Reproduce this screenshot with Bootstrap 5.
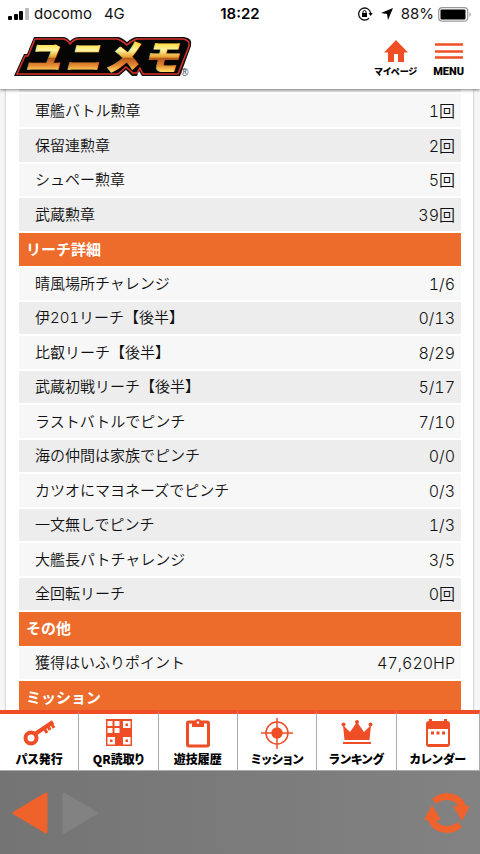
<!DOCTYPE html>
<html lang="ja">
<head>
<meta charset="utf-8">
<meta name="viewport" content="width=device-width, initial-scale=1">
<title>ユニメモ</title>
<link href="https://cdn.jsdelivr.net/npm/bootstrap@5.3.0/dist/css/bootstrap.min.css" rel="stylesheet">
<style>
body{font-family:Inter,"Noto Sans CJK JP",sans-serif;color:#222;background:#f6f6f6}
.status-bar{height:28px;font-size:15px;line-height:28px;color:#111;grid-template-columns:1fr auto 1fr;z-index:3}
.clock{font-weight:600;color:#000}
.site-head{height:61px;box-shadow:0 1px 3px rgba(0,0,0,.5);z-index:2}
.head-link{color:#000;font-weight:900;line-height:12px}
.head-link.jp{font-size:9px;font-family:"Noto Sans CJK JP",sans-serif;font-feature-settings:"palt"}
.head-link.en{font-size:11px;font-family:Roboto,sans-serif}
.brand-logo{overflow:visible}
.sheet{margin:0 7px 0 6px;padding:0 12px 0 13px;background:#fff;box-shadow:0 0 2px rgba(0,0,0,.35)}
.records{border-top:3px solid #ededed;font-size:15px;line-height:20px;border-collapse:separate;border-spacing:0;font-variant-numeric:tabular-nums}
.records tr{height:34px}
.records tr:nth-child(even){height:35px}
.records th,.records td{padding:0 6px 0 16px;border-bottom:2px solid #fff;background:#f7f7f7;color:#111;font-weight:350;vertical-align:middle}
.records tbody tr:first-child>*{border-top:2px solid #fff}
.records tr:first-child{height:37px}
.records tr.even>*{background:#ededed}
.records td{text-align:right;font-size:16px}
.records tr .group{background:#ee6c2b;color:#fff;font-weight:700;padding-left:7px;border-bottom-width:1px}
.tab-bar{height:61px;background:#fff;z-index:2}
.tab-link{border-top:4px solid #ee4d26;border-right:1px solid #aaa;border-bottom:1px solid #aaa;color:#000;font:900 12px/18px "Noto Sans CJK JP",sans-serif;font-feature-settings:"palt";flex:20 1 0}
.tab-link:last-child{flex-grow:21}
.tab-link svg{height:32px;width:36px}
.browser-bar{height:83px;background:linear-gradient(90deg,#747474,#828282);padding:0 10px 0 12px;gap:14px}
</style>
<script src="https://cdn.jsdelivr.net/npm/bootstrap@5.3.0/dist/js/bootstrap.bundle.min.js"></script>
</head>
<body class="vh-100 d-flex flex-column overflow-hidden">
<div class="status-bar position-relative d-grid bg-white px-2 flex-shrink-0">
  <div class="d-flex align-items-center">
    <svg class="me-1" width="22" height="12"><rect y="8" width="4" height="4" rx="1"/><rect x="6" y="6" width="4" height="6" rx="1"/><rect x="11" y="3" width="4" height="9" rx="1"/><rect x="17" width="4" height="12" rx="1" fill="#bbb"/></svg>
    <span class="me-2 pe-1">docomo</span><span>4G</span>
  </div>
  <div class="clock">18:22</div>
  <div class="d-flex align-items-center justify-content-end">
    <svg class="me-2" width="15" height="14" viewBox="0 0 15 14"><path d="M12.6 6A6 6 0 1 0 11 11.200" fill="none" stroke="#111" stroke-width="1.300"/><path d="M10.500 6h4.200l-2 3zM4 6h5v4H4z"/><path d="M5 6V5a1.500 1.500 0 0 1 3 0v1" fill="none" stroke="#111"/></svg>
    <svg class="me-2" width="12" height="12" viewBox="0 0 12 12"><path d="M12 0L7 12 6 6 0 5z"/></svg>
    <span class="me-1">88%</span>
    <svg width="34" height="15" viewBox="0 0 34 15"><rect x=".7" y=".7" width="29" height="13.500" rx="3.500" fill="none" stroke="#999" stroke-width="1.200"/><rect x="2.500" y="2.500" width="25" height="10" rx="1"/><path d="M31.500 5q2.500 2.500 0 5z" fill="#999"/></svg>
  </div>
</div>
<header class="site-head bg-white d-flex justify-content-between align-items-start position-relative flex-shrink-0 ps-2 pe-2">
  <a href="#" class="pt-1 mt-1" aria-label="ユニメモ">
    <svg class="brand-logo ms-1" width="182" height="48" viewBox="12 36 182 48">
      <defs><linearGradient id="gold" gradientUnits="userSpaceOnUse" x1="0" y1="43" x2="0" y2="71"><stop offset="0" stop-color="#ffd83a"/><stop offset=".25" stop-color="#fff5a0"/><stop offset=".5" stop-color="#e8a32e"/><stop offset=".55" stop-color="#b85a20"/><stop offset=".8" stop-color="#e58a32"/><stop offset="1" stop-color="#ffd860"/></linearGradient></defs>
      <path d="M34 37H63Q67 37 70 41Q74 37 79 37H118Q121 37 127 42Q133 37 137 37H184Q193 38 191 46L180 76H142L139 71 137 76H132L126 70 119 76H14L24 54H27Z" fill="#111"/>
      <path d="M35 39H62Q67 39 70 44Q74 39 79 39H117Q121 40 127 45Q133 40 137 39H183Q190 40 189 46L178 74H143L140 68 137 73H133L126 67 118 74H17L25 56H28Z" fill="#050505" stroke="#d9302a" stroke-width="1.500"/>
      <g font-family="Noto Sans CJK JP,sans-serif" font-size="35" font-weight="900" font-style="italic" fill="url(#gold)" stroke="url(#gold)" stroke-width="1"><text x="25" y="70">ユ</text><text x="65" y="70">ニ</text><text x="104" y="70">メ</text><text x="143" y="70">モ</text></g>
      <text x="181" y="76" font-size="10" font-family="Liberation Sans,sans-serif" fill="#333">®</text>
    </svg>
  </a>
  <nav class="d-flex gap-3 pe-1">
    <a href="#" class="head-link jp text-decoration-none d-flex flex-column align-items-center pt-2">
      <svg class="mt-1 mb-1" width="24" height="22" viewBox="0 0 24 22"><path d="M12 0L24 12.500H20V22H14V14H10V22H4V12.500H0Z" fill="#f04e26"/></svg>マイページ</a>
    <a href="#" class="head-link en text-decoration-none d-flex flex-column align-items-center pt-2 pe-1">
      <svg class="mt-1 mb-1" width="28" height="22"><path d="M0 4.500H28M0 11.500H28M0 17.500H28" stroke="#f04e26" stroke-width="2.500"/></svg>MENU</a>
  </nav>
</header>
<main class="flex-fill overflow-hidden">
  <div class="sheet">
    <table class="records w-100">
      <tbody>
        <tr><th scope="row">軍艦バトル勲章</th><td>1回</td></tr>
        <tr class="even"><th scope="row">保留連勲章</th><td>2回</td></tr>
        <tr><th scope="row">シュペー勲章</th><td>5回</td></tr>
        <tr class="even"><th scope="row">武蔵勲章</th><td>39回</td></tr>
        <tr><th colspan="2" class="group">リーチ詳細</th></tr>
        <tr><th scope="row">晴風場所チャレンジ</th><td>1/6</td></tr>
        <tr class="even"><th scope="row">伊201リーチ【後半】</th><td>0/13</td></tr>
        <tr><th scope="row">比叡リーチ【後半】</th><td>8/29</td></tr>
        <tr class="even"><th scope="row">武蔵初戦リーチ【後半】</th><td>5/17</td></tr>
        <tr><th scope="row">ラストバトルでピンチ</th><td>7/10</td></tr>
        <tr class="even"><th scope="row">海の仲間は家族でピンチ</th><td>0/0</td></tr>
        <tr><th scope="row">カツオにマヨネーズでピンチ</th><td>0/3</td></tr>
        <tr class="even"><th scope="row">一文無しでピンチ</th><td>1/3</td></tr>
        <tr><th scope="row">大艦長パトチャレンジ</th><td>3/5</td></tr>
        <tr class="even"><th scope="row">全回転リーチ</th><td>0回</td></tr>
        <tr><th colspan="2" class="group">その他</th></tr>
        <tr><th scope="row">獲得はいふりポイント</th><td>47,620HP</td></tr>
        <tr><th colspan="2" class="group">ミッション</th></tr>
      </tbody>
    </table>
  </div>
</main>
<nav class="tab-bar d-flex position-relative flex-shrink-0">
  <a href="#" class="tab-link text-decoration-none d-flex flex-column align-items-center pt-1">
    <svg viewBox="0 0 36 32" fill="none" stroke="#ee4d26"><circle cx="10" cy="20" r="5.500" stroke-width="4"/><path d="M14 16L32 4" stroke-width="4"/><path d="M23 10l3 5M27 8l2 4M30 5l3 5" stroke-width="3"/></svg>パス発行</a>
  <a href="#" class="tab-link text-decoration-none d-flex flex-column align-items-center pt-1">
    <svg viewBox="0 0 36 32"><path d="M5 1H31V28H5Z" fill="#ee4d26"/><path d="M6.500 3h5v5h-5zM13.500 3h5v5h-5zM6.500 10h5v5h-5zM13.500 10h5v5h-5zM22 3h7.500v7H22zM6.500 19H14v7.500H6.500zM22 19h7.500v7.500H22z" fill="#fff"/><path d="M24.500 5.500h2.500v2.500h-2.500zM9 21.500h2.500V24H9zM24.500 21.500h2.500V24h-2.500z" fill="#ee4d26"/></svg>QR読取り</a>
  <a href="#" class="tab-link text-decoration-none d-flex flex-column align-items-center pt-1">
    <svg viewBox="0 0 36 32"><rect x="7.500" y="4" width="21" height="24" rx="1.500" fill="none" stroke="#ee4d26" stroke-width="3"/><path d="M12 4h3a3 3 0 0 1 6 0h3v5H12z" fill="#ee4d26"/><circle cx="18" cy="4.500" r="1.200" fill="#fff"/></svg>遊技履歴</a>
  <a href="#" class="tab-link text-decoration-none d-flex flex-column align-items-center pt-1">
    <svg viewBox="0 0 36 32" fill="none" stroke="#ee4d26" stroke-width="1.500"><circle cx="18" cy="15" r="11"/><circle cx="18" cy="15" r="5" fill="#ee4d26"/><path d="M18 -1V31M2 15H34"/></svg>ミッション</a>
  <a href="#" class="tab-link text-decoration-none d-flex flex-column align-items-center pt-1">
    <svg viewBox="0 0 36 32" fill="#ee4d26"><path d="M4 7l7 7 7-10 7 10 7-7-1.500 15h-25z"/><circle cx="4.500" cy="6.500" r="2"/><circle cx="18" cy="4" r="2"/><circle cx="31.500" cy="6.500" r="2"/><path d="M4 24h28v2H4z"/></svg>ランキング</a>
  <a href="#" class="tab-link text-decoration-none d-flex flex-column align-items-center pt-1">
    <svg viewBox="0 0 36 32"><rect x="6" y="3" width="24" height="26" rx="3" fill="#ee4d26"/><path d="M9 1h3v4H9zM24 1h3v4h-3z" fill="#ee4d26"/><path d="M8 11h20v15H8z" fill="#fff"/><path d="M11 13.500h3v3h-3zM16.500 13.500h3v3h-3zM22 13.500h3v3h-3z" fill="#ee4d26"/></svg>カレンダー</a>
</nav>
<div class="browser-bar d-flex align-items-center flex-shrink-0">
  <button type="button" class="btn border-0 p-0" aria-label="戻る"><svg class="d-block" width="36" height="42" viewBox="0 0 36 42"><path d="M2 21L34 2V40Z" fill="#ef622b" stroke="#ef622b" stroke-width="3" stroke-linejoin="round"/></svg></button>
  <button type="button" class="btn border-0 p-0" aria-label="進む"><svg class="d-block" width="36" height="42" viewBox="0 0 36 42"><path d="M34 21L2 2V40Z" fill="#828282" stroke="#828282" stroke-width="3" stroke-linejoin="round"/></svg></button>
  <button type="button" class="btn border-0 p-0 ms-auto" aria-label="再読み込み"><svg class="d-block" width="46" height="42" viewBox="0 0 46 42" fill="#ef622b"><path d="M8 7Q15 1 23 1Q38 2 42 14H46L38 29 29 14H34Q31 8 23 8Q17 8 12 12Z"/><path d="M38 35Q31 41 23 41Q8 40 4 28H0L8 13 17 28H12Q15 34 23 34Q29 34 34 30Z"/></svg></button>
</div>
</body>
</html>
